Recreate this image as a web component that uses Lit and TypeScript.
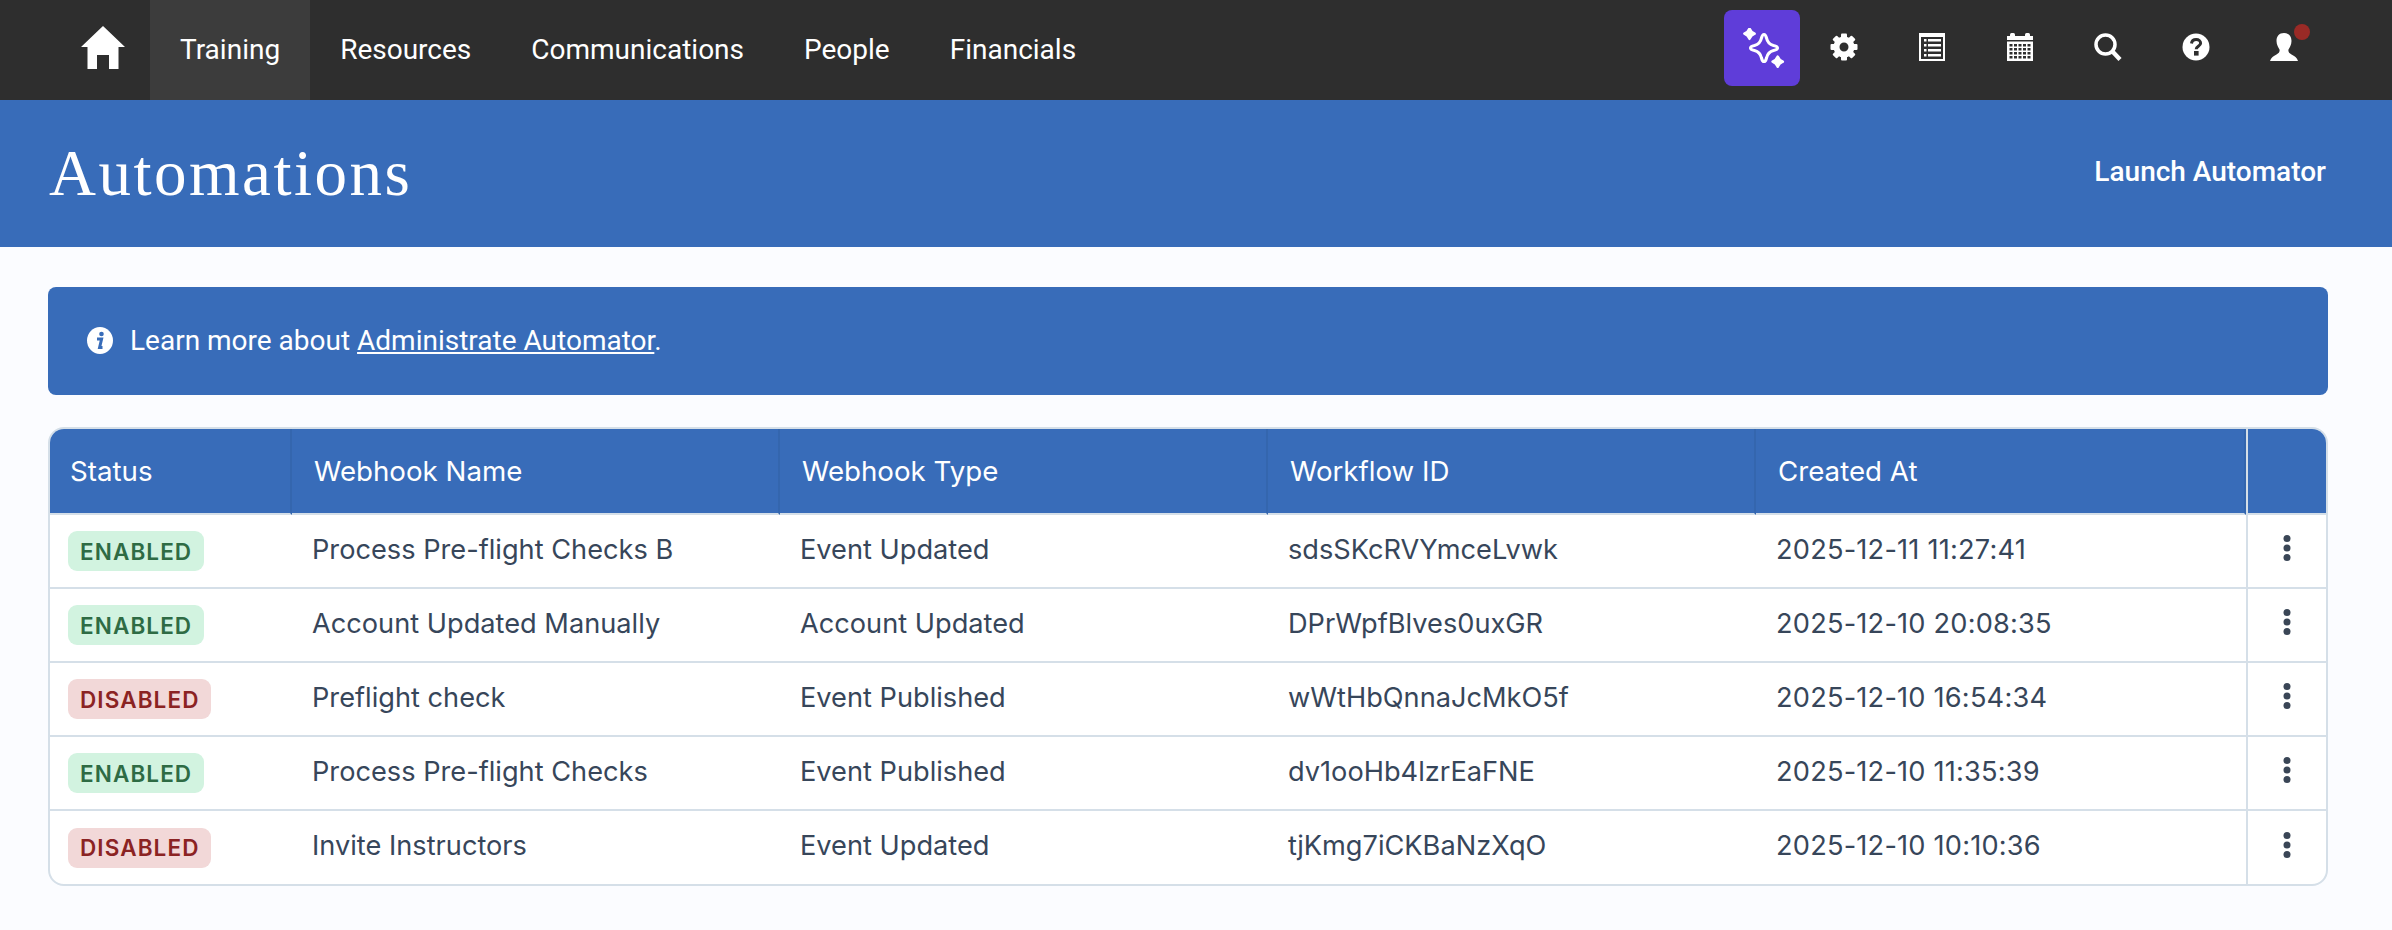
import { LitElement, css, html, svg } from "lit";
import { customElement } from "lit/decorators.js";

const TABS = ["Training", "Resources", "Communications", "People", "Financials"];

const ROWS = [
  { on: true, name: "Process Pre-flight Checks B", type: "Event Updated", id: "sdsSKcRVYmceLvwk", at: "2025-12-11 11:27:41" },
  { on: true, name: "Account Updated Manually", type: "Account Updated", id: "DPrWpfBlves0uxGR", at: "2025-12-10 20:08:35" },
  { on: false, name: "Preflight check", type: "Event Published", id: "wWtHbQnnaJcMkO5f", at: "2025-12-10 16:54:34" },
  { on: true, name: "Process Pre-flight Checks", type: "Event Published", id: "dv1ooHb4lzrEaFNE", at: "2025-12-10 11:35:39" },
  { on: false, name: "Invite Instructors", type: "Event Updated", id: "tjKmg7iCKBaNzXqO", at: "2025-12-10 10:10:36" },
];

const DARK = "#2e2e2e";

const homeIcon = html`<svg width="44" height="43" viewBox="0 0 44 43" fill="#fff">
  <path d="M22 0 44 21H37.500V43H28V29H16V43H6.500V21H0Z" />
</svg>`;

const sparkIcon = html`<svg width="46" height="40" viewBox="0 0 46 40">
  <path d="M25 6.500C26.500 6.500 27 8 27.500 10 28.500 14.500 30.500 16.500 34.500 17.500 37 18 38.500 18.500 38.500 20 38.500 21.500 37 22 34.500 22.500 30.500 23.500 28.500 25.500 27.500 30 27 32 26.500 33.500 25 33.500 23.500 33.500 23 32 22.500 30 21.500 25.500 19.500 23.500 15.500 22.500 13 22 11.500 21.500 11.500 20 11.500 18.500 13 18 15.500 17.500 19.500 16.500 21.500 14.500 22.500 10 23 8 23.500 6.500 25 6.500Z"
    fill="none" stroke="#fff" stroke-width="3.100" stroke-linejoin="round" />
  <path d="M10.500 0.500C11.500 3 13 4.600 15.700 5.700 13 6.800 11.500 8.400 10.500 10.900 9.500 8.400 8 6.800 5.300 5.700 8 4.600 9.500 3 10.500 0.500Z"
    fill="#fff" stroke="#fff" stroke-width="2.400" stroke-linejoin="round" />
  <path d="M38.700 28.500C39.700 31 41.200 32.600 43.900 33.700 41.200 34.800 39.700 36.400 38.700 38.900 37.700 36.400 36.200 34.800 33.500 33.700 36.200 32.600 37.700 31 38.700 28.500Z"
    fill="#fff" stroke="#fff" stroke-width="2.400" stroke-linejoin="round" />
</svg>`;

const gearIcon = html`<svg width="28" height="28" viewBox="0 0 28 28" fill="#fff">
  ${[0, 45, 90, 135, 180, 225, 270, 315].map(
    (a) => svg`<rect x="11" y="0.500" width="6" height="6" rx="1" transform="rotate(${a} 14 14)" />`,
  )}
  <circle cx="14" cy="14" r="7.500" fill="none" stroke="#fff" stroke-width="6" />
</svg>`;

const listIcon = html`<svg width="28" height="28" viewBox="0 0 28 28">
  <rect x="1" width="26" height="28" fill="#fff" />
  <rect x="3" y="4" width="22" height="22" fill="${DARK}" />
  ${[7, 12, 17, 22].map(
    (y) => svg`<rect x="6" y="${y - 1}" width="2.500" height="2.500" fill="#fff" /><rect x="10" y="${y - 1}" width="13" height="2.500" fill="#fff" />`,
  )}
</svg>`;

const calendarIcon = html`<svg width="28" height="28" viewBox="0 0 28 28" fill="#fff">
  <rect x="1" y="3" width="26" height="4" />
  <rect x="4" y="0" width="5" height="4" rx="1.500" />
  <rect x="19" y="0" width="5" height="4" rx="1.500" />
  <rect x="1" y="8.500" width="26" height="19.500" />
  ${[11, 15, 19, 23].flatMap((y) =>
    [3.5, 8, 12.5, 17, 21.5].map(
      (x) => svg`<rect x="${x}" y="${y}" width="3" height="2.500" fill="${DARK}" />`,
    ),
  )}
</svg>`;

const searchIcon = html`<svg width="28" height="28" viewBox="0 0 28 28" fill="none" stroke="#fff">
  <circle cx="11.500" cy="11.500" r="9.500" stroke-width="3.500" />
  <path d="M18.500 18.500 26 26.500" stroke-width="4.200" />
</svg>`;

const helpIcon = html`<svg width="28" height="28" viewBox="0 0 28 28">
  <circle cx="14" cy="14" r="13.500" fill="#fff" />
  <path d="M9.500 10.500C9.800 7.800 11.600 6.500 14.200 6.500 16.800 6.500 18.600 8 18.600 10.200 18.600 13.200 14.200 13.400 14.200 16.200"
    fill="none" stroke="${DARK}" stroke-width="3" />
  <rect x="12" y="18" width="4.600" height="4.600" fill="${DARK}" />
</svg>`;

const userIcon = html`<svg width="28" height="28" viewBox="0 0 28 28" fill="#fff">
  <path d="M14 0C19 0 21.500 3.500 21.500 8 21.500 12 19.500 14.500 18.500 16.500 18 18.500 19 20 21.500 21.500 24.500 23 27 24.500 28 28H0C1 24.500 3.500 23 6.500 21.500 9 20 10 18.500 9.500 16.500 8.500 14.500 6.500 12 6.500 8 6.500 3.500 9 0 14 0Z" />
</svg>`;

const infoIcon = html`<svg width="26" height="27" viewBox="0 0 26 27">
  <ellipse cx="13" cy="13.500" rx="13" ry="13.500" fill="#fff" />
  <circle cx="14.500" cy="7" r="2.300" fill="#386cb9" />
  <path d="M10 12H14.600L12.600 20.500H15.500" fill="none" stroke="#386cb9" stroke-width="3" />
</svg>`;

const kebabIcon = html`<svg width="8" height="26" viewBox="0 0 8 26" fill="#3a4656">
  <circle cx="4" cy="3.500" r="3.500" />
  <circle cx="4" cy="13" r="3.500" />
  <circle cx="4" cy="22.500" r="3.500" />
</svg>`;

@customElement("app-root")
export class AppRoot extends LitElement {
  static styles = css`
    :host {
      display: block;
      min-height: 930px;
      background: #fbfcff;
      font-family: Roboto, sans-serif;
    }

    .nav {
      display: flex;
      align-items: stretch;
      height: 100px;
      padding-right: 64px;
      background: #2e2e2e;
      color: #fff;
      font-size: 28px;
    }

    .home {
      display: flex;
      align-items: center;
      justify-content: center;
      width: 94px;
      margin-left: 56px;
      padding-bottom: 5px;
    }

    .tab {
      display: flex;
      align-items: center;
      padding: 0 30px 2px;
    }

    .tab.active {
      background: #3c3c3c;
    }

    .tools {
      display: flex;
      align-items: center;
      margin-left: auto;
    }

    .spark {
      display: flex;
      align-items: center;
      justify-content: center;
      width: 76px;
      height: 76px;
      margin-bottom: 4px;
      border-radius: 8px;
      background: #5f3dd9;
    }

    .tool {
      position: relative;
      display: flex;
      align-items: center;
      justify-content: center;
      width: 88px;
      padding-bottom: 6px;
    }

    .dot {
      position: absolute;
      top: -9px;
      right: 18px;
      width: 16px;
      height: 16px;
      border-radius: 50%;
      background: #9a2a26;
    }

    .head {
      display: flex;
      align-items: center;
      justify-content: space-between;
      height: 147px;
      padding: 0 66px 0 49px;
      background: #386cb9;
      color: #fff;
    }

    .title {
      margin: 0;
      font-family: "Liberation Serif", serif;
      font-size: 65px;
      font-weight: 400;
      letter-spacing: 2.500px;
    }

    .launch {
      padding-bottom: 5px;
      font-size: 28px;
      font-weight: 500;
    }

    .main {
      padding: 40px 64px 0 48px;
    }

    .alert {
      display: flex;
      align-items: center;
      gap: 17px;
      height: 108px;
      margin-bottom: 32px;
      padding: 0 0 2px 39px;
      box-sizing: border-box;
      border-radius: 8px;
      background: #386cb9;
      color: #fff;
      font-size: 28px;
    }

    .alert a {
      color: #fff;
      text-decoration: underline;
    }

    .wrap {
      overflow: hidden;
      border: 2px solid #d5dfe8;
      border-radius: 16px;
      background: #fff;
    }

    table {
      width: 2276px;
      table-layout: fixed;
      border-collapse: separate;
      border-spacing: 0;
      font-family: Inter, sans-serif;
      font-size: 27.200px;
      color: #37465a;
    }

    th {
      height: 84px;
      padding: 0 0 0 22px;
      box-sizing: content-box;
      border-right: 2px solid #3466ae;
      border-bottom: 2px solid #d5dfe8;
      background: #386cb9;
      color: #fff;
      font-size: 27.700px;
      font-weight: 400;
      text-align: left;
    }

    th:first-child {
      padding-left: 20px;
    }

    td {
      height: 74px;
      padding: 0 0 4px 20px;
      box-sizing: border-box;
      border-bottom: 2px solid #d5dfe8;
      white-space: nowrap;
    }

    tr:last-child td {
      height: 73px;
      border-bottom: 0;
    }

    td.status {
      padding: 0 0 0 18px;
    }

    td.when {
      letter-spacing: 0.200px;
    }

    .act {
      padding: 0;
      border-left: 2px solid #d5dfe8;
      text-align: center;
    }

    th.act {
      border-right: 0;
    }

    td.act {
      padding-bottom: 6px;
    }

    td.act svg {
      display: block;
      margin: 0 auto;
    }

    .badge {
      display: inline-flex;
      align-items: center;
      height: 40px;
      padding: 0 12px;
      border-radius: 9px;
      font-size: 22.500px;
      font-weight: 600;
      letter-spacing: 1.100px;
      vertical-align: middle;
    }

    .badge.on {
      background: #d2f3e0;
      color: #2e6b44;
    }

    .badge.off {
      background: #f2d8d8;
      color: #8b2323;
    }
  `;

  render() {
    return html`
      <nav class="nav">
        <div class="home">${homeIcon}</div>
        ${TABS.map(
          (t, i) => html`<div class="tab ${i === 0 ? "active" : ""}">${t}</div>`,
        )}
        <div class="tools">
          <div class="spark">${sparkIcon}</div>
          <div class="tool">${gearIcon}</div>
          <div class="tool">${listIcon}</div>
          <div class="tool">${calendarIcon}</div>
          <div class="tool">${searchIcon}</div>
          <div class="tool">${helpIcon}</div>
          <div class="tool">${userIcon}<span class="dot"></span></div>
        </div>
      </nav>
      <header class="head">
        <h1 class="title">Automations</h1>
        <div class="launch">Launch Automator</div>
      </header>
      <main class="main">
        <div class="alert">
          ${infoIcon}
          <span>Learn more about <a href="#">Administrate Automator</a>.</span>
        </div>
        <div class="wrap">
          <table>
            <colgroup>
              <col style="width:242px" />
              <col style="width:488px" />
              <col style="width:488px" />
              <col style="width:488px" />
              <col style="width:490px" />
              <col style="width:80px" />
            </colgroup>
            <thead>
              <tr>
                <th>Status</th>
                <th>Webhook Name</th>
                <th>Webhook Type</th>
                <th>Workflow ID</th>
                <th>Created At</th>
                <th class="act"></th>
              </tr>
            </thead>
            <tbody>
              ${ROWS.map(
                (r) => html`<tr>
                  <td class="status">
                    <span class="badge ${r.on ? "on" : "off"}">${r.on ? "ENABLED" : "DISABLED"}</span>
                  </td>
                  <td>${r.name}</td>
                  <td>${r.type}</td>
                  <td>${r.id}</td>
                  <td class="when">${r.at}</td>
                  <td class="act">${kebabIcon}</td>
                </tr>`,
              )}
            </tbody>
          </table>
        </div>
      </main>
    `;
  }
}
